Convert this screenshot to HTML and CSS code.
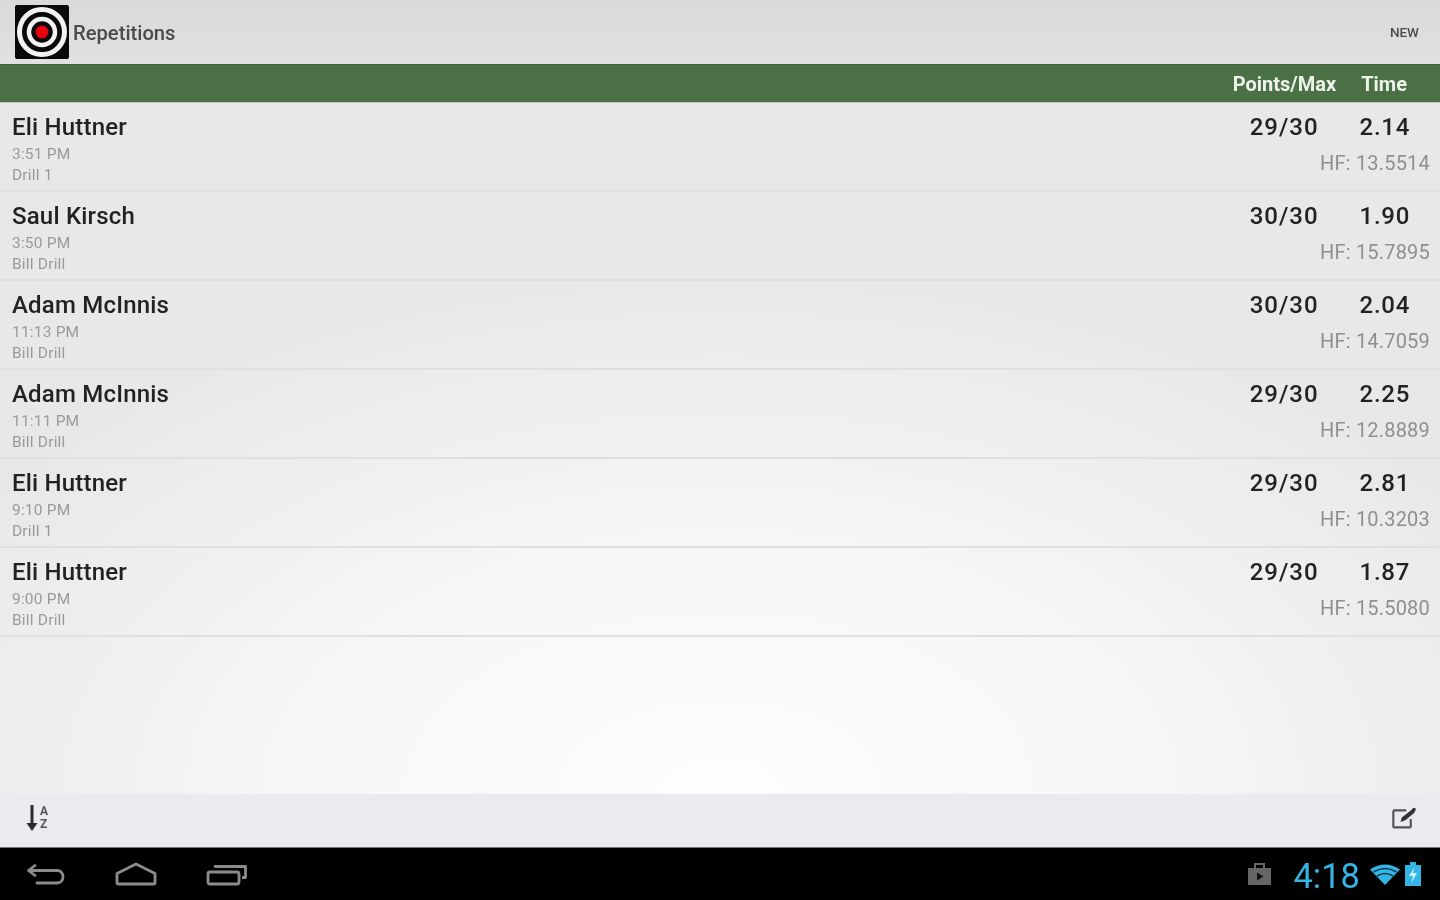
FILE: index.html
```html
<!DOCTYPE html>
<html lang="en">
<head>
<meta charset="utf-8">
<title>Repetitions</title>
<link rel="stylesheet" href="styles.css">
</head>
<body>
<div class="app">
  <header class="actionbar">
    <svg class="logo" viewBox="0 0 54 54" width="54" height="54">
      <rect x="0" y="0" width="54" height="54" rx="2" fill="#0a0a0a"/>
      <circle cx="27" cy="27" r="22.500" fill="none" stroke="#f2f2f2" stroke-width="5"/>
      <circle cx="27" cy="27" r="13" fill="none" stroke="#f2f2f2" stroke-width="4.500"/>
      <circle cx="27" cy="27" r="6.500" fill="#e8000c"/>
    </svg>
    <span class="title">Repetitions</span>
    <span class="new">NEW</span>
  </header>
  <div class="colhead">
    <span class="ch-points">Points/Max</span>
    <span class="ch-time">Time</span>
  </div>
  <main class="content">
    <div class="row">
      <div class="left"><div class="name">Eli Huttner</div><div class="sub sub-time">3:51 PM</div><div class="sub">Drill 1</div></div>
      <div class="right"><div class="scores"><span class="pts">29/30</span><span class="tm">2.14</span></div><div class="hf">HF: 13.5514</div></div>
    </div>
    <div class="row">
      <div class="left"><div class="name">Saul Kirsch</div><div class="sub sub-time">3:50 PM</div><div class="sub">Bill Drill</div></div>
      <div class="right"><div class="scores"><span class="pts">30/30</span><span class="tm">1.90</span></div><div class="hf">HF: 15.7895</div></div>
    </div>
    <div class="row">
      <div class="left"><div class="name">Adam McInnis</div><div class="sub sub-time">11:13 PM</div><div class="sub">Bill Drill</div></div>
      <div class="right"><div class="scores"><span class="pts">30/30</span><span class="tm">2.04</span></div><div class="hf">HF: 14.7059</div></div>
    </div>
    <div class="row">
      <div class="left"><div class="name">Adam McInnis</div><div class="sub sub-time">11:11 PM</div><div class="sub">Bill Drill</div></div>
      <div class="right"><div class="scores"><span class="pts">29/30</span><span class="tm">2.25</span></div><div class="hf">HF: 12.8889</div></div>
    </div>
    <div class="row">
      <div class="left"><div class="name">Eli Huttner</div><div class="sub sub-time">9:10 PM</div><div class="sub">Drill 1</div></div>
      <div class="right"><div class="scores"><span class="pts">29/30</span><span class="tm">2.81</span></div><div class="hf">HF: 10.3203</div></div>
    </div>
    <div class="row">
      <div class="left"><div class="name">Eli Huttner</div><div class="sub sub-time">9:00 PM</div><div class="sub">Bill Drill</div></div>
      <div class="right"><div class="scores"><span class="pts">29/30</span><span class="tm">1.87</span></div><div class="hf">HF: 15.5080</div></div>
    </div>
  </main>
  <div class="bottombar">
    <span class="sort">
      <svg viewBox="0 0 14 28" width="14" height="28"><path d="M7 1V22" stroke="#2b2b2b" stroke-width="3" fill="none"/><path d="M1.500 19L7 27L12.500 19Z" fill="#2b2b2b"/></svg>
      <span class="az"><span>A</span><span>Z</span></span>
    </span>
    <svg class="edit" viewBox="0 0 28 24" width="25" height="22">
      <path d="M21 13V21.500A1 1 0 0 1 20 22.500H2.500A1 1 0 0 1 1.500 21.500V4.500A1 1 0 0 1 2.500 3.500H16" fill="none" stroke="#555" stroke-width="2.400" stroke-linejoin="round"/>
      <path d="M9.500 16.500L11 11.500L21 3.500L24 0.500L27 1.500L25 6L15 14.500Z" fill="#333"/>
    </svg>
  </div>
  <footer class="navbar">
    <div class="nav-buttons">
      <svg viewBox="0 0 40 24" width="40" height="24"><path d="M9 3.500L2.500 8.500L9 13.500M3 8.500H31C39 8.500 39 21 31 21H11" fill="none" stroke="#8c8c8c" stroke-width="2.800" stroke-linecap="round" stroke-linejoin="round"/></svg>
      <svg viewBox="0 0 42 24" width="42" height="24"><path d="M2 11.500L21 2L40 11.500V20.500A1.500 1.500 0 0 1 38.500 22H3.500A1.500 1.500 0 0 1 2 20.500Z" fill="none" stroke="#8c8c8c" stroke-width="2.800" stroke-linejoin="round"/></svg>
      <svg viewBox="0 0 42 24" width="42" height="24"><rect x="2" y="10" width="31" height="12" rx="2" fill="none" stroke="#8c8c8c" stroke-width="2.800"/><path d="M9 5.500V4.500H39.500V15.500H36" fill="none" stroke="#8c8c8c" stroke-width="2.800" stroke-linejoin="round"/></svg>
    </div>
    <div class="status">
      <svg class="bag" viewBox="0 0 25 24" width="25" height="24"><path d="M1 6H24V23H1Z" fill="#666"/><path d="M8 6V2H17V6" fill="none" stroke="#666" stroke-width="2"/><path d="M10 10.500L16.500 14.500L10 18.500Z" fill="#111"/></svg>
      <span class="clock">4:18</span>
      <svg class="wifi" viewBox="0 0 30 22" width="30" height="22"><path d="M0 6.500Q15 -3.500 30 6.500L15 22Z" fill="#33b5e5"/><path d="M3.500 9Q15 2 26.500 9M7 13Q15 8 23 13" fill="none" stroke="#0a3a4c" stroke-width="1.500"/></svg>
      <svg viewBox="0 0 16 24" width="16" height="24"><path d="M5 0H11V3H16V24H0V3H5Z" fill="#33b5e5"/><path d="M9.500 5L4 14H8L6.500 21L12 11H8Z" fill="#cdeefa"/></svg>
    </div>
  </footer>
</div>
</body>
</html>
```
FILE: styles.css
```css
* { box-sizing: border-box; }
html, body { margin: 0; padding: 0; }
body { font-family: Roboto, "Liberation Sans", sans-serif; background: #000; }
.app { width: 1440px; height: 900px; display: flex; flex-direction: column; overflow: hidden; filter: blur(0.6px); }

.actionbar {
  height: 64px; flex: none; display: flex; align-items: center;
  padding: 0 21px 0 15px;
  background: linear-gradient(#d9d9d9, #e1e1e1);
}
.logo { flex: none; }
.title { font-size: 20.200px; color: #4a4a4a; margin-left: 4px; margin-top: 1px; font-weight: 500; }
.new { margin-left: auto; font-size: 13.500px; font-weight: 500; color: #4d4d4d; margin-top: -1px; }

.colhead {
  height: 39px; flex: none; display: flex; align-items: center; justify-content: flex-end;
  background: #4b7045; color: #eef3ea; font-size: 20px; font-weight: 700;
  border-top: 1px solid #3f5d3a;
  border-bottom: 1px solid #c4cbc2;
  padding-right: 33px;
}
.ch-time { margin-left: 25px; }

.content {
  flex: 1; min-height: 0;
  background: radial-gradient(ellipse 900px 520px at 50% 100%, #fdfdfd 0%, #f7f7f7 45%, #e8e8e8 100%);
  background-color: #e8e8e8;
}
.row {
  height: 89px; display: flex; justify-content: space-between;
  padding: 10px 10px 0 12px;
  border-bottom: 2px solid #e0e0e0;
}
.left { display: flex; flex-direction: column; }
.name { font-size: 24px; line-height: 28px; color: #222; font-weight: 500; letter-spacing: 0.2px; }
.sub { font-size: 15.500px; line-height: 21px; color: #9a9a9a; letter-spacing: 0.2px; }
.sub-time { margin-top: 3px; }
.right { display: flex; flex-direction: column; align-items: flex-end; }
.scores { display: flex; font-size: 24px; line-height: 28px; font-weight: 500; color: #222; padding-right: 20px; letter-spacing: 1px; }
.tm { margin-left: 41px; letter-spacing: 0.7px; }
.hf { font-size: 20px; line-height: 24px; color: #8f8f8f; margin-top: 10px; letter-spacing: 0.2px; }

.bottombar {
  height: 53px; flex: none; display: flex; align-items: center; justify-content: space-between;
  padding: 0 23px 6px 25px; background: #ebebef;
}
.sort { display: flex; align-items: center; gap: 1px; }
.az { display: flex; flex-direction: column; font-size: 12px; line-height: 13px; font-weight: 700; color: #555; }
.edit { flex: none; }

.navbar {
  height: 53px; flex: none; display: flex; align-items: center; justify-content: space-between;
  padding: 0 19px 0 26px; background: #000;
  border-top: 1px solid #777;
}
.nav-buttons { display: flex; align-items: center; gap: 49px; }
.status { display: flex; align-items: center; gap: 5px; }
.bag { margin-right: 16px; }
.clock { font-size: 34.500px; color: #33b5e5; font-weight: 400; line-height: 40px; margin-top: 3px; margin-right: 5px; }
```
